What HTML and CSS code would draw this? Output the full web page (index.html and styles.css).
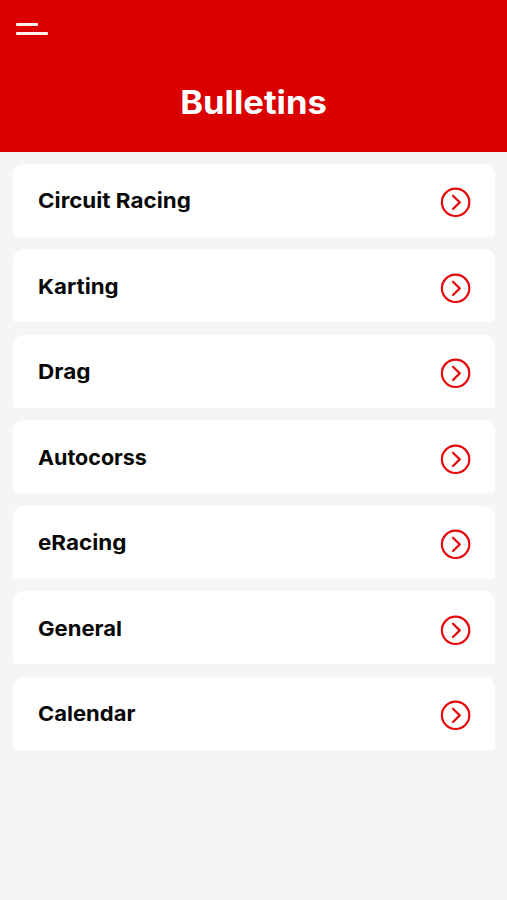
FILE: index.html
```html
<!DOCTYPE html>
<html lang="en">
<head>
<meta charset="utf-8">
<title>Bulletins</title>
<link rel="stylesheet" href="styles.css">
</head>
<body>
<svg class="symbols" aria-hidden="true">
  <symbol id="arrow" viewBox="0 0 32 32"><circle cx="15.6" cy="16.3" r="13.7"/><path d="M13 9.7 19.8 16.4 13 23"/></symbol>
</svg>
<header class="header">
  <button class="menu" aria-label="Menu"><span class="bar bar-short"></span><span class="bar"></span></button>
  <h1 class="title">Bulletins</h1>
</header>
<main class="list">
  <a class="card"><span class="label circuit">Circuit Racing</span><svg class="arrow"><use href="#arrow"/></svg></a>
  <a class="card"><span class="label karting">Karting</span><svg class="arrow"><use href="#arrow"/></svg></a>
  <a class="card"><span class="label drag">Drag</span><svg class="arrow"><use href="#arrow"/></svg></a>
  <a class="card"><span class="label autocross">Autocorss</span><svg class="arrow"><use href="#arrow"/></svg></a>
  <a class="card"><span class="label eracing">eRacing</span><svg class="arrow"><use href="#arrow"/></svg></a>
  <a class="card"><span class="label general">General</span><svg class="arrow"><use href="#arrow"/></svg></a>
  <a class="card"><span class="label calendar">Calendar</span><svg class="arrow"><use href="#arrow"/></svg></a>
</main>
</body>
</html>
```
FILE: styles.css
```css
* { box-sizing: border-box; }
body {
  margin: 0;
  min-height: 900px;
  background: #f5f5f5;
  color: #080808;
  font-family: Inter, "Liberation Sans", sans-serif;
}
.symbols { display: none; }
.header {
  height: 151.5px;
  padding: 23px 16px 0;
  background: #da0000;
}
.menu {
  display: flex;
  flex-direction: column;
  gap: 5.5px;
  width: 32px;
  padding: 0;
  border: 0;
  background: none;
}
.bar {
  width: 32px;
  height: 3px;
  border-radius: 1px;
  background: #fff0ee;
}
.bar-short { width: 22px; }
.title {
  margin: 48.5px 0 0;
  color: #fff;
  font-size: 32px;
  font-weight: 700;
  line-height: 40px;
  text-align: center;
  transform: scaleX(1.08);
}
.list {
  display: flex;
  flex-direction: column;
  gap: 12.5px;
  padding: 12px 12px 0 13px;
}
.card {
  display: flex;
  align-items: center;
  justify-content: space-between;
  height: 73px;
  padding: 0 23px 0 24.5px;
  border-radius: 11px 11px 4px 4px;
  background: #fff;
}
.label {
  margin-top: 2px;
  font-size: 20.5px;
  font-weight: 700;
  line-height: 28px;
  transform-origin: left center;
}
.circuit { transform: scaleX(1.092); }
.karting { transform: scaleX(1.088); }
.drag { transform: scaleX(1.1); }
.autocross { transform: scaleX(1.048); }
.eracing { transform: scaleX(1.095); }
.general { transform: scaleX(1.076); }
.calendar { transform: scaleX(1.073); }
.arrow {
  width: 32px;
  height: 32px;
  margin-top: 4px;
  fill: none;
  stroke: #e5090b;
  stroke-width: 2.2;
  stroke-linecap: round;
  stroke-linejoin: round;
}
.arrow path { stroke-width: 2.8; }
```
